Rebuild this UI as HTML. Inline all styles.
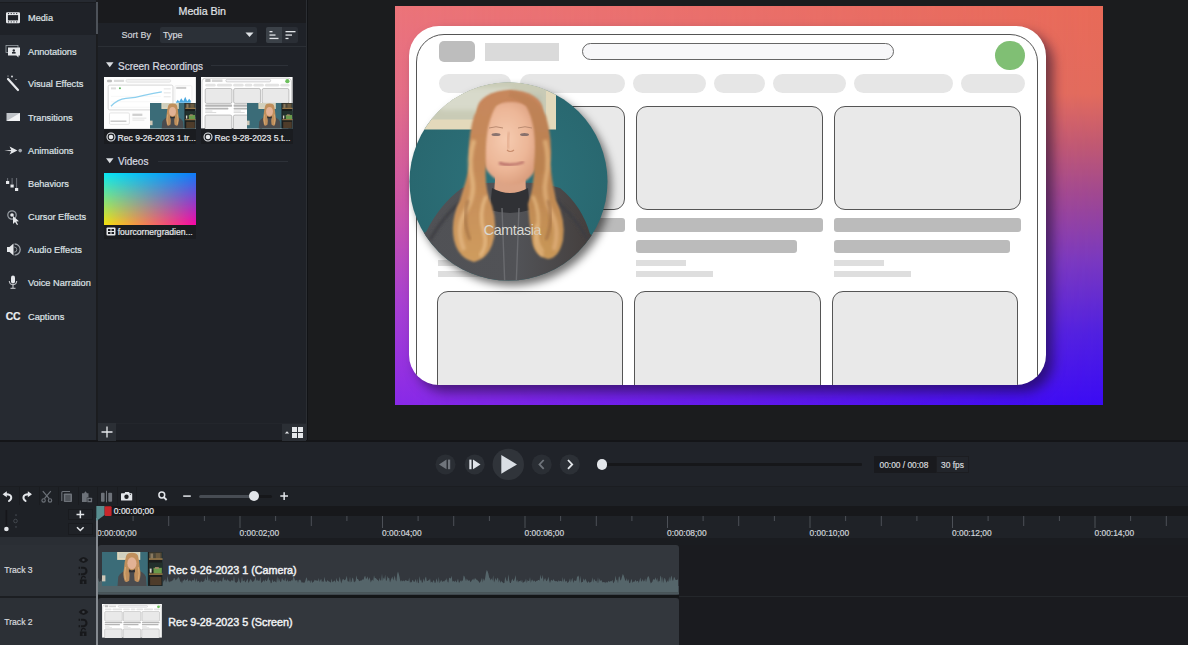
<!DOCTYPE html><html><head><meta charset="utf-8"><style>
*{margin:0;padding:0;box-sizing:border-box}
html,body{width:1188px;height:645px;overflow:hidden;background:#1b1c1f;font-family:"Liberation Sans",sans-serif;color:#d6d9dd}
.a{position:absolute}
.t{white-space:nowrap;-webkit-text-stroke:0.2px currentColor}
</style></head><body><div class="a" style="left:0px;top:0px;width:96px;height:441px;background:#262a31"></div>
<div class="a" style="left:0px;top:2px;width:96px;height:32.5px;background:#1f2228"></div>
<div class="a" style="left:0px;top:2px;width:96px;height:1px;background:#1a1c20"></div>
<div class="a" style="left:96.6px;top:0px;width:1.4px;height:441px;background:#1b1d20"></div>
<div class="a" style="left:96px;top:2px;width:1.6px;height:32px;background:#4d5259"></div>
<div class="a" style="left:98px;top:0px;width:208px;height:441px;background:#1f2228"></div>
<div class="a" style="left:98px;top:0px;width:208px;height:23px;background:#1a1b1e"></div>
<div class="a" style="left:98px;top:46px;width:208px;height:1px;background:#2b2f35"></div>
<div class="a" style="left:306px;top:0px;width:882px;height:441px;background:#1b1c1e"></div>
<div class="a" style="left:305.8px;top:0px;width:1.2px;height:441px;background:#2b2e33"></div>
<div class="a" style="left:307px;top:0px;width:1.3px;height:441px;background:#111316"></div>
<div class="a" style="left:0px;top:441px;width:1188px;height:45px;background:#202329"></div>
<div class="a" style="left:0px;top:440px;width:1188px;height:1.6px;background:#141518"></div>
<div class="a" style="left:0px;top:486px;width:1188px;height:20px;background:#1e2126"></div>
<div class="a" style="left:0px;top:485.5px;width:1188px;height:1px;background:#1b1d21"></div>
<div class="a" style="left:0px;top:506px;width:1188px;height:139px;background:#1a1b1f"></div>
<div class="a t" style="left:28px;top:14.1px;font-size:9.2px;line-height:9.2px;color:#dfe2e6">Media</div>
<div class="a t" style="left:28px;top:47.5px;font-size:9.2px;line-height:9.2px;color:#dfe2e6">Annotations</div>
<div class="a t" style="left:28px;top:80.2px;font-size:9.2px;line-height:9.2px;color:#dfe2e6">Visual Effects</div>
<div class="a t" style="left:28px;top:113.6px;font-size:9.2px;line-height:9.2px;color:#dfe2e6">Transitions</div>
<div class="a t" style="left:28px;top:146.9px;font-size:9.2px;line-height:9.2px;color:#dfe2e6">Animations</div>
<div class="a t" style="left:28px;top:180.0px;font-size:9.2px;line-height:9.2px;color:#dfe2e6">Behaviors</div>
<div class="a t" style="left:28px;top:213.1px;font-size:9.2px;line-height:9.2px;color:#dfe2e6">Cursor Effects</div>
<div class="a t" style="left:28px;top:246.1px;font-size:9.2px;line-height:9.2px;color:#dfe2e6">Audio Effects</div>
<div class="a t" style="left:28px;top:279.3px;font-size:9.2px;line-height:9.2px;color:#dfe2e6">Voice Narration</div>
<div class="a t" style="left:28px;top:312.5px;font-size:9.2px;line-height:9.2px;color:#dfe2e6">Captions</div>
<svg class="a" style="left:0;top:0" width="96" height="330" viewBox="0 0 96 330">
<rect x="6" y="12.2" width="14" height="11.1" rx="1.2" fill="#e6e8eb"/>
<rect x="7.9" y="15.1" width="10.2" height="5.3" fill="#1e2127"/>
<g fill="#1e2127"><rect x="8" y="13.1" width="1.1" height="1"/><rect x="10.7" y="13.1" width="1.1" height="1"/><rect x="13.4" y="13.1" width="1.1" height="1"/><rect x="16.1" y="13.1" width="1.1" height="1"/>
<rect x="8" y="21.4" width="1.1" height="1"/><rect x="10.7" y="21.4" width="1.1" height="1"/><rect x="13.4" y="21.4" width="1.1" height="1"/><rect x="16.1" y="21.4" width="1.1" height="1"/></g>
<!-- annotations -->
<rect x="6" y="45.5" width="12" height="7" fill="none" stroke="#9aa0a6" stroke-width="0.8"/>
<path d="M8 47.5h12v8h-1.5v2l-2.2-2H8z" fill="#e6e8eb"/>
<circle cx="13.8" cy="50.5" r="1.2" fill="#262a31"/><rect x="12" y="52" width="3.6" height="1.6" fill="#262a31"/>
<!-- visual effects wand -->
<path d="M8 79 L18 90" stroke="#e6e8eb" stroke-width="2.2" stroke-linecap="round"/>
<circle cx="12" cy="76.5" r="0.9" fill="#e6e8eb"/><circle cx="16" cy="79.5" r="0.6" fill="#e6e8eb"/><circle cx="8" cy="76" r="0.5" fill="#e6e8eb"/>
<!-- transitions -->
<path d="M6.5 113h13.5v8H6.5z" fill="#bfc3c8"/><path d="M6.5 121L20 113v8z" fill="#f2f3f5"/>
<!-- animations -->
<path d="M4.2 150.6 L11.2 149.9 L9.6 146.6 L17.4 150.6 L9.6 154.6 L11.2 151.3 Z" fill="#e6e8eb"/><circle cx="20.2" cy="150.6" r="1.8" fill="#a5aab0"/>
<!-- behaviors -->
<rect x="6" y="181" width="3.2" height="3" fill="#e6e8eb"/><rect x="10.5" y="184.5" width="3.2" height="3" fill="#e6e8eb"/><rect x="15" y="188" width="3.2" height="3" fill="#e6e8eb"/>
<path d="M7.6 178v3M12.1 178v6.5M16.6 178v10" stroke="#7d828a" stroke-width="0.8"/>
<!-- cursor effects -->
<circle cx="12" cy="215" r="4.2" fill="none" stroke="#9aa0a6" stroke-width="1.2"/><circle cx="12" cy="215" r="1.8" fill="#e6e8eb"/>
<path d="M13 216 L13 224 L15 222 L17 225 L18 224.4 L16.3 221.5 L19 221.2z" fill="#e6e8eb"/>
<!-- audio effects -->
<path d="M7 247h2.5l4-3.5v12l-4-3.5H7z" fill="#e6e8eb"/><path d="M14.6 244 A5.6 5.6 0 0 1 14.6 255.2" fill="none" stroke="#a0a5ab" stroke-width="1.3"/><path d="M14.2 247 A2.6 2.6 0 0 1 14.2 252.2" fill="none" stroke="#8a9096" stroke-width="1"/>
<!-- voice narration -->
<rect x="11" y="275.5" width="4" height="8" rx="2" fill="#e6e8eb"/><path d="M9.2 281a3.8 3.8 0 0 0 7.6 0" fill="none" stroke="#e6e8eb" stroke-width="0.9"/><path d="M13 285v3M10.5 288.3h5" stroke="#e6e8eb" stroke-width="0.9"/>
</svg>
<div class="a t" style="left:5.8px;top:312.2px;font-size:10.4px;line-height:10.4px;font-weight:bold;color:#eceef0;letter-spacing:-0.2px">CC</div>
<div class="a t" style="left:178.5px;top:5.6px;font-size:10.7px;line-height:10.7px;color:#e0e3e7">Media Bin</div>
<div class="a t" style="left:121.5px;top:31.4px;font-size:9px;line-height:9px;color:#cfd3d8">Sort By</div>
<div class="a" style="left:160px;top:27px;width:97px;height:16px;background:#2b3037;border-radius:2px"></div>
<div class="a t" style="left:163px;top:31.4px;font-size:9px;line-height:9px;color:#d6d9dd">Type</div>
<svg class="a" style="left:245px;top:32px" width="9" height="6"><path d="M0.5 0.5h8L4.5 5z" fill="#dfe2e6"/></svg>
<div class="a" style="left:266px;top:27px;width:32px;height:16px;background:#2a2e35;border-radius:2px"></div>
<div class="a" style="left:266px;top:27px;width:16px;height:16px;background:#3b4148;border-radius:2px 0 0 2px"></div>
<svg class="a" style="left:266px;top:27px" width="32" height="16">
<g fill="#e1e4e8"><rect x="3.5" y="4" width="3" height="1.3"/><rect x="3.5" y="7.4" width="6" height="1.3"/><rect x="3.5" y="10.8" width="9" height="1.3"/></g>
<g fill="#e1e4e8"><rect x="19.5" y="4" width="10" height="1.3"/><rect x="19.5" y="7.4" width="6.5" height="1.3"/><rect x="19.5" y="10.8" width="3" height="1.3"/></g>
</svg>
<svg class="a" style="left:106px;top:62px" width="8" height="6"><path d="M0 0.3h7.5L3.75 5.3z" fill="#d9dce0"/></svg>
<div class="a t" style="left:118px;top:61.8px;font-size:10px;line-height:10px;color:#d9dce0">Screen Recordings</div>
<div class="a" style="left:211px;top:65px;width:77px;height:1px;background:#2d3138"></div>
<svg class="a" style="left:106px;top:157.5px" width="8" height="6"><path d="M0 0.3h7.5L3.75 5.3z" fill="#d9dce0"/></svg>
<div class="a t" style="left:118px;top:157.0px;font-size:10px;line-height:10px;color:#d9dce0">Videos</div>
<div class="a" style="left:158px;top:160.5px;width:130px;height:1px;background:#2d3138"></div>
<div class="a" style="left:104px;top:129px;width:92px;height:15px;background:#1a1c20"></div>
<svg class="a" style="left:106px;top:132px" width="10" height="10"><circle cx="5" cy="5" r="4" fill="none" stroke="#e6e8eb" stroke-width="1.1"/><circle cx="5" cy="5" r="2.3" fill="#e6e8eb"/></svg>
<div class="a t" style="left:117.5px;top:133.9px;font-size:8.6px;line-height:8.6px;color:#e6e8eb">Rec 9-26-2023 1.tr...</div>
<div class="a" style="left:201px;top:129px;width:92px;height:15px;background:#1a1c20"></div>
<svg class="a" style="left:203px;top:132px" width="10" height="10"><circle cx="5" cy="5" r="4" fill="none" stroke="#e6e8eb" stroke-width="1.1"/><circle cx="5" cy="5" r="2.3" fill="#e6e8eb"/></svg>
<div class="a t" style="left:214.5px;top:133.9px;font-size:8.6px;line-height:8.6px;color:#e6e8eb">Rec 9-28-2023 5.t...</div>
<div class="a" style="left:104px;top:224.6px;width:92px;height:14px;background:#1a1c20"></div>
<svg class="a" style="left:106px;top:227px" width="10" height="9"><rect x="0.5" y="0.5" width="9" height="8" rx="1" fill="#e6e8eb"/><g fill="#1a1c20"><rect x="2" y="2" width="2.5" height="2"/><rect x="5.5" y="2" width="2.5" height="2"/><rect x="2" y="5" width="2.5" height="2"/><rect x="5.5" y="5" width="2.5" height="2"/></g></svg>
<div class="a t" style="left:117.7px;top:228.1px;font-size:8.6px;line-height:8.6px;color:#e6e8eb">fourcornergradien...</div>
<div class="a" style="left:104px;top:173px;width:92px;height:52px;background:linear-gradient(to right,#f5e20c,#fa06a6)"><div style="position:absolute;inset:0;background:linear-gradient(to right,#06e6f6,#0c7cf8);-webkit-mask-image:linear-gradient(to bottom,#000,transparent)"></div></div>
<div class="a" style="left:98px;top:422.5px;width:208px;height:1px;background:#23262c"></div>
<div class="a" style="left:98px;top:423px;width:18px;height:18px;background:#2b2f35"></div>
<svg class="a" style="left:100px;top:425px" width="14" height="14"><path d="M7 1.5v11M1.5 7h11" stroke="#e6e8eb" stroke-width="1.3"/></svg>
<div class="a" style="left:282px;top:424px;width:24px;height:17px;background:#2b2f35"></div>
<svg class="a" style="left:283px;top:425px" width="22" height="15"><path d="M1.8 8.6l2.2-2.4 2.2 2.4z" fill="#e6e8eb"/><g fill="#e6e8eb"><rect x="9" y="2" width="5" height="5"/><rect x="15" y="2" width="5" height="5"/><rect x="9" y="8" width="5" height="5"/><rect x="15" y="8" width="5" height="5"/></g></svg>
<div class="a" style="left:395px;top:6px;width:708px;height:399px;overflow:hidden;background:linear-gradient(to bottom,#ec7479 0%,#e46e88 22%,#cc56a8 50%,#a840d2 75%,#8a2ae8 100%)"><div style="position:absolute;inset:0;background:linear-gradient(to bottom,#e86a58 0%,#e26b5c 22%,#bf5872 35%,#a04890 47%,#7838c0 64%,#5020e0 82%,#3a0af4 100%);-webkit-mask-image:linear-gradient(to right,transparent,#000)"></div></div>
<div class="a" style="left:409px;top:26px;width:637px;height:358.5px;border-radius:30px;background:#fff;box-shadow:7px 7px 12px rgba(20,10,40,0.55);overflow:hidden">
<div class="a" style="left:7.0px;top:8.0px;width:622.0px;height:420.0px;border:1.3px solid #555;border-radius:28px"></div>
<div class="a" style="left:29.6px;top:14.6px;width:36.7px;height:21.1px;background:#bdbdbd;border-radius:5px"></div>
<div class="a" style="left:75.5px;top:16.7px;width:74.0px;height:18.0px;background:#dadada"></div>
<div class="a" style="left:172.5px;top:16.6px;width:312.0px;height:17.7px;background:#f7f7f9;border:1.2px solid #666;border-radius:9px"></div>
<div class="a" style="left:586.0px;top:14.8px;width:29.6px;height:29.6px;background:#80bf74;border-radius:50%"></div>
<div class="a" style="left:29.8px;top:47.5px;width:72.4px;height:19.4px;background:#e6e6e6;border-radius:10px"></div>
<div class="a" style="left:110.7px;top:47.5px;width:105.1px;height:19.4px;background:#e6e6e6;border-radius:10px"></div>
<div class="a" style="left:224.0px;top:47.5px;width:72.7px;height:19.4px;background:#e6e6e6;border-radius:10px"></div>
<div class="a" style="left:304.5px;top:47.5px;width:51.8px;height:19.4px;background:#e6e6e6;border-radius:10px"></div>
<div class="a" style="left:364.4px;top:47.5px;width:72.7px;height:19.4px;background:#e6e6e6;border-radius:10px"></div>
<div class="a" style="left:444.8px;top:47.5px;width:99.3px;height:19.4px;background:#e6e6e6;border-radius:10px"></div>
<div class="a" style="left:552.0px;top:47.5px;width:63.7px;height:19.4px;background:#e6e6e6;border-radius:10px"></div>
<div class="a" style="left:29.0px;top:80.0px;width:186.7px;height:104.0px;background:#e9e9e9;border:1.2px solid #555;border-radius:11px"></div>
<div class="a" style="left:29.0px;top:191.7px;width:186.7px;height:14.7px;background:#bbbbbb;border-radius:3px"></div>
<div class="a" style="left:29.0px;top:214.0px;width:140.0px;height:12.5px;background:#bbbbbb;border-radius:3px"></div>
<div class="a" style="left:29.0px;top:233.7px;width:50.4px;height:6.8px;background:#dedede"></div>
<div class="a" style="left:29.0px;top:244.7px;width:77.0px;height:6.4px;background:#dedede"></div>
<div class="a" style="left:227.0px;top:80.0px;width:186.7px;height:104.0px;background:#e9e9e9;border:1.2px solid #555;border-radius:11px"></div>
<div class="a" style="left:227.0px;top:191.7px;width:186.7px;height:14.7px;background:#bbbbbb;border-radius:3px"></div>
<div class="a" style="left:227.0px;top:214.0px;width:161.3px;height:12.5px;background:#bbbbbb;border-radius:3px"></div>
<div class="a" style="left:227.0px;top:233.7px;width:50.4px;height:6.8px;background:#dedede"></div>
<div class="a" style="left:227.0px;top:244.7px;width:77.0px;height:6.4px;background:#dedede"></div>
<div class="a" style="left:425.0px;top:80.0px;width:186.7px;height:104.0px;background:#e9e9e9;border:1.2px solid #555;border-radius:11px"></div>
<div class="a" style="left:425.0px;top:191.7px;width:186.7px;height:14.7px;background:#bbbbbb;border-radius:3px"></div>
<div class="a" style="left:425.0px;top:214.0px;width:176.2px;height:12.5px;background:#bbbbbb;border-radius:3px"></div>
<div class="a" style="left:425.0px;top:233.7px;width:50.4px;height:6.8px;background:#dedede"></div>
<div class="a" style="left:425.0px;top:244.7px;width:77.0px;height:6.4px;background:#dedede"></div>
<div class="a" style="left:27.8px;top:265.0px;width:186.4px;height:130.0px;background:#e9e9e9;border:1.2px solid #555;border-radius:11px"></div>
<div class="a" style="left:225.4px;top:265.0px;width:186.4px;height:130.0px;background:#e9e9e9;border:1.2px solid #555;border-radius:11px"></div>
<div class="a" style="left:422.8px;top:265.0px;width:186.4px;height:130.0px;background:#e9e9e9;border:1.2px solid #555;border-radius:11px"></div>
</div>
<svg class="a" style="left:395px;top:70px" width="240" height="230" viewBox="395 70 240 230">
<defs>
<clipPath id="cc"><circle cx="508.5" cy="181.6" r="99"/></clipPath>
<filter id="sh" x="-20%" y="-20%" width="140%" height="140%"><feGaussianBlur stdDeviation="4.5"/></filter>
<filter id="bl1" x="-20%" y="-20%" width="140%" height="140%"><feGaussianBlur stdDeviation="0.8"/></filter>
<filter id="bl2" x="-20%" y="-20%" width="140%" height="140%"><feGaussianBlur stdDeviation="2.5"/></filter>
<filter id="bl3" x="-30%" y="-30%" width="160%" height="160%"><feGaussianBlur stdDeviation="1.4"/></filter>
<radialGradient id="teal" cx="0.5" cy="0.5" r="0.55"><stop offset="0" stop-color="#2d737c"/><stop offset="0.85" stop-color="#296870"/><stop offset="1" stop-color="#205860"/></radialGradient>
<linearGradient id="hairL" x1="0" y1="0" x2="0" y2="1"><stop offset="0" stop-color="#c7875c"/><stop offset="0.45" stop-color="#c48a58"/><stop offset="1" stop-color="#cf9c5e"/></linearGradient>
<linearGradient id="hairR" x1="0" y1="0" x2="0" y2="1"><stop offset="0" stop-color="#c08258"/><stop offset="0.45" stop-color="#bb8250"/><stop offset="1" stop-color="#c99858"/></linearGradient>
<radialGradient id="skin" cx="0.42" cy="0.45" r="0.62"><stop offset="0" stop-color="#f6cbb0"/><stop offset="0.6" stop-color="#ecb697"/><stop offset="1" stop-color="#d89a7a"/></radialGradient>
<linearGradient id="hood" x1="0" y1="0" x2="1" y2="0"><stop offset="0" stop-color="#505155"/><stop offset="0.55" stop-color="#515256"/><stop offset="0.85" stop-color="#45403f"/><stop offset="1" stop-color="#3a3234"/></linearGradient>
</defs>
<circle cx="512.5" cy="186.5" r="99" fill="rgba(0,0,0,0.55)" filter="url(#sh)"/>
<g clip-path="url(#cc)">
 <rect x="405" y="78" width="210" height="210" fill="url(#teal)"/>
 <rect x="405" y="78" width="151" height="51.5" fill="#e3d9bb"/>
 <rect x="405" y="78" width="141" height="41.5" fill="#c9cbb6"/>
 <rect x="440" y="88" width="70" height="22" fill="#d8dacb" filter="url(#bl2)"/>
 <rect x="512" y="95" width="30" height="22" fill="#bcc2b2" filter="url(#bl2)"/>
 <!-- hoodie -->
 <path d="M400 300 L400 250 Q410 236 426 232 Q440 204 462 188 Q485 180 510 184 Q536 180 560 188 Q582 206 590 234 Q606 242 618 258 L618 300Z" fill="url(#hood)"/>
 <path d="M430 240 Q446 212 466 198" stroke="#3d3e42" stroke-width="3" fill="none" filter="url(#bl3)"/>
 <path d="M588 240 Q572 212 552 198" stroke="#3d3e42" stroke-width="3" fill="none" filter="url(#bl3)"/>
 <!-- neck + collar -->
 <path d="M496 166 L525 166 L526 194 L494 194Z" fill="#dda486"/>
 <path d="M492 188 Q510 198 528 188 L530 210 Q510 216 490 210Z" fill="#303135"/>
 <path d="M502 208 L505 290 M519 208 L516 290" stroke="#6a6b6f" stroke-width="1.4" fill="none"/>
 <!-- head top -->
 <ellipse cx="510" cy="110" rx="33" ry="20" fill="#c7865c" filter="url(#bl1)"/>
 <!-- face -->
 <path d="M492 106 Q511 98 530 106 Q541 122 541 146 Q540 170 527 180 Q512 189 497 180 Q481 170 480 146 Q481 122 492 106Z" fill="url(#skin)" filter="url(#bl1)"/>
 <!-- hair -->
 <path d="M510 91 Q484 94 474 116 Q467 140 470 164 Q466 182 460 200 Q450 220 454 240 Q458 258 474 262 Q490 258 494 238 Q497 222 492 206 Q484 188 486 166 Q484 126 496 106 Q504 99 512 97Z" fill="url(#hairL)" filter="url(#bl1)"/>
 <path d="M510 91 Q536 94 546 116 Q553 140 550 164 Q552 182 556 200 Q566 220 563 240 Q559 258 548 259 Q534 256 532 240 Q529 222 528 204 Q534 188 534 166 Q538 126 526 106 Q518 99 508 97Z" fill="url(#hairR)" filter="url(#bl1)"/>
 <!-- wave highlights -->
 <path d="M474 140 Q468 160 472 178 Q476 196 464 214 Q456 230 464 250" stroke="#dfb07a" stroke-width="4.5" fill="none" filter="url(#bl3)"/>
 <path d="M486 196 Q478 214 484 232 Q488 246 480 256" stroke="#e6ba84" stroke-width="3" fill="none" filter="url(#bl3)"/>
 <path d="M545 140 Q550 160 546 178 Q542 196 552 214 Q560 230 554 250" stroke="#daa872" stroke-width="4.5" fill="none" filter="url(#bl3)"/>
 <path d="M533 196 Q541 214 537 232 Q533 246 543 256" stroke="#e0b27a" stroke-width="3" fill="none" filter="url(#bl3)"/>
 <path d="M468 200 Q462 220 470 240" stroke="#9c6a40" stroke-width="2" fill="none" filter="url(#bl3)"/>
 <path d="M548 200 Q554 220 546 240" stroke="#9c6a40" stroke-width="2" fill="none" filter="url(#bl3)"/>
 <!-- features -->
 <path d="M489 128 Q496 125.5 503 128" stroke="#b98a70" stroke-width="1" fill="none"/>
 <path d="M518 128 Q525 125.5 532 128" stroke="#b98a70" stroke-width="1" fill="none"/>
 <ellipse cx="496" cy="134.5" rx="4.5" ry="1.6" fill="#5e5258" opacity="0.7"/>
 <ellipse cx="524.5" cy="134.5" rx="4.5" ry="1.6" fill="#5e5258" opacity="0.7"/>
 <path d="M509 132 Q507 142 508 149" stroke="#dca080" stroke-width="1.6" fill="none" filter="url(#bl1)"/>
 <path d="M507 150 Q510.5 153 514 150" stroke="#c88c6c" stroke-width="1.2" fill="none"/>
 <path d="M499 163 Q511 167 524 162" stroke="#b86e68" stroke-width="2.4" fill="none" filter="url(#bl1)"/>
 <text x="483.7" y="235" font-family="Liberation Sans" font-size="14.2" fill="#d8d8d2" letter-spacing="-0.3">Camtasia</text>
 <path d="M537 224 Q534 240 543 252" stroke="#e0b27a" stroke-width="2.5" fill="none" filter="url(#bl3)"/>
</g>
</svg>

<svg class="a" style="left:420px;top:441px" width="200" height="45" viewBox="420 441 200 45">
<circle cx="445.5" cy="464.4" r="10" fill="#2a2e34"/>
<circle cx="474.7" cy="464.4" r="10" fill="#2c3036"/>
<circle cx="508.3" cy="464.4" r="15.7" fill="#30343a"/>
<circle cx="541.7" cy="464.4" r="10" fill="#2a2e34"/>
<circle cx="569.8" cy="464.4" r="10" fill="#2c3036"/>
<path d="M439 464.4 L446.5 459.6 V469.2Z" fill="#70757c"/><rect x="448" y="459.6" width="2.2" height="9.6" fill="#70757c"/>
<rect x="469.3" y="459.6" width="2.2" height="9.6" fill="#dfe3e8"/><path d="M473 459.6 L480.5 464.4 L473 469.2Z" fill="#dfe3e8"/>
<path d="M501.3 455 L517 464.4 L501.3 473.8Z" fill="#d9dee4"/>
<path d="M543.7 460 L539.5 464.4 L543.7 468.8" stroke="#70757c" stroke-width="1.8" fill="none"/>
<path d="M568 460 L572.2 464.4 L568 468.8" stroke="#e3e6ea" stroke-width="1.8" fill="none"/>
</svg>
<div class="a" style="left:602px;top:463px;width:260px;height:2.6px;background:#16171a;border-radius:1px"></div>
<div class="a" style="left:596.8px;top:459.2px;width:10.4px;height:10.4px;background:#e3e6ea;border-radius:50%"></div>
<div class="a" style="left:874.3px;top:455.5px;width:62px;height:17.7px;background:#191a1e"></div>
<div class="a" style="left:936.4px;top:455.5px;width:32.6px;height:17.7px;background:#22252b;border:1px solid #1c1d21"></div>
<div class="a t" style="left:879.5px;top:461.4px;font-size:8.4px;line-height:8.4px;color:#d6d9dd">00:00 / 00:08</div>
<div class="a t" style="left:941px;top:461.4px;font-size:8.4px;line-height:8.4px;color:#d6d9dd">30 fps</div>
<div class="a" style="left:19.0px;top:487px;width:1px;height:18px;background:#1a1c20"></div>
<div class="a" style="left:38.5px;top:487px;width:1px;height:18px;background:#1a1c20"></div>
<div class="a" style="left:58.0px;top:487px;width:1px;height:18px;background:#1a1c20"></div>
<div class="a" style="left:77.5px;top:487px;width:1px;height:18px;background:#1a1c20"></div>
<div class="a" style="left:97.0px;top:487px;width:1px;height:18px;background:#1a1c20"></div>
<div class="a" style="left:116.5px;top:487px;width:1px;height:18px;background:#1a1c20"></div>
<div class="a" style="left:136.0px;top:487px;width:1px;height:18px;background:#1a1c20"></div>
<svg class="a" style="left:0;top:486px" width="300" height="20" viewBox="0 486 300 20">
<path d="M5 494.3 Q10.5 493.8 11.2 497 Q11.6 499.3 9 501" stroke="#e3e6ea" stroke-width="2" fill="none" stroke-linecap="round"/><path d="M2.6 494.3 L6.8 491.3 L6.8 497.3Z" fill="#e3e6ea"/>
<path d="M29.6 494.3 Q24.2 493.8 23.5 497 Q23.1 499.3 25.6 501" stroke="#e3e6ea" stroke-width="2" fill="none" stroke-linecap="round"/><path d="M32 494.3 L27.8 491.3 L27.8 497.3Z" fill="#e3e6ea"/>
<path d="M42.8 491.2 L49.2 498.6 M50.8 491.2 L44.4 498.6" stroke="#6d7279" stroke-width="1.2"/><circle cx="43.6" cy="500.4" r="1.7" fill="none" stroke="#6d7279" stroke-width="1.1"/><circle cx="50" cy="500.4" r="1.7" fill="none" stroke="#6d7279" stroke-width="1.1"/>
<path d="M61.8 501 V492.5 Q61.8 491.5 62.8 491.5 H70" stroke="#6d7279" stroke-width="1.1" fill="none"/><rect x="63.8" y="493.5" width="8.2" height="8.5" rx="0.8" fill="#6d7279"/><path d="M65.3 496h5.2M65.3 498h5.2M65.3 500h5.2" stroke="#23262c" stroke-width="0.8"/>
<path d="M82 502 V493.3 H84 L85.5 491.3 L87 493.3 H88.5 V497.5 H86.8 V502Z" fill="#6d7279"/><rect x="87.3" y="497.7" width="4.8" height="4.6" rx="0.5" fill="#6d7279"/><rect x="88.6" y="499" width="2.2" height="2" fill="#23262c"/>
<rect x="101" y="492.8" width="3.6" height="9" rx="0.8" fill="#6d7279"/><rect x="108.3" y="492.8" width="3.8" height="9" rx="0.8" fill="#6d7279"/><rect x="106" y="490.8" width="1" height="11.5" fill="#6d7279"/>
<path d="M121 493.8 Q121 493.2 121.6 493.2 H124.5 L125.2 492 H129 L129.7 493.2 H131.6 Q132.2 493.2 132.2 493.8 V500 Q132.2 500.5 131.6 500.5 H121.6 Q121 500.5 121 500Z" fill="#e3e6ea"/><circle cx="126.5" cy="496.7" r="2.2" fill="#1c1e22"/><circle cx="130.3" cy="494.5" r="0.5" fill="#1c1e22"/>
<circle cx="161.8" cy="495" r="2.9" fill="none" stroke="#e3e6ea" stroke-width="1.5"/><path d="M163.8 497.2 L166.6 500" stroke="#e3e6ea" stroke-width="1.8"/>
<path d="M183.2 496.1 H190.8" stroke="#e3e6ea" stroke-width="1.5"/>
<path d="M280.3 496.1 H288 M284.15 492.3 V500" stroke="#e3e6ea" stroke-width="1.5"/>
</svg>
<div class="a" style="left:199.3px;top:494.5px;width:72.7px;height:3.2px;background:#16171a;border-radius:2px"></div>
<div class="a" style="left:199.3px;top:494.5px;width:54px;height:3.2px;background:#474c53;border-radius:2px"></div>
<div class="a" style="left:248.6px;top:490.9px;width:10.4px;height:10.4px;background:#e3e6ea;border-radius:50%"></div>
<div class="a" style="left:0px;top:506px;width:96px;height:31px;background:#1e2126"></div>
<div class="a" style="left:0px;top:537px;width:96px;height:7.5px;background:#2a2e34"></div>
<div class="a" style="left:68px;top:508.6px;width:25px;height:11.5px;background:#1f2227;border:1px solid #191b1f"></div>
<div class="a" style="left:68px;top:523.4px;width:25px;height:11.8px;background:#1f2227;border:1px solid #191b1f"></div>
<svg class="a" style="left:0;top:506px" width="96" height="32" viewBox="0 506 96 32">
<path d="M76.5 514.4 H84.2 M80.35 510.5 V518.3" stroke="#e3e6ea" stroke-width="1.5"/>
<path d="M77 527.3 L80.3 530.5 L83.6 527.3" stroke="#e3e6ea" stroke-width="1.6" fill="none"/>
<rect x="5.6" y="510" width="1.6" height="23" fill="#15161a"/><circle cx="6.4" cy="529" r="2.3" fill="#e3e6ea"/>
<path d="M14.8 515.5 L16 514 L17.2 515.5Z" fill="#4b5057"/><circle cx="15.5" cy="521" r="1.8" fill="none" stroke="#4b5057" stroke-width="0.8"/><path d="M14.8 526.5 L16 528 L17.2 526.5Z" fill="#4b5057"/>
</svg>
<div class="a" style="left:96px;top:506px;width:1092px;height:10px;background:#17181b"></div>
<div class="a" style="left:96px;top:516px;width:1092px;height:21.5px;background:#1f2227"></div>
<div class="a" style="left:96px;top:537.5px;width:1092px;height:7px;background:#1a1c20"></div>
<svg class="a" style="left:0;top:0" width="1188" height="645"><rect x="97.0" y="516" width="1" height="12" fill="#4c5057"/><rect x="132.6" y="516" width="1" height="5" fill="#4c5057"/><rect x="168.2" y="516" width="1" height="10" fill="#4c5057"/><rect x="203.9" y="516" width="1" height="5" fill="#4c5057"/><rect x="239.5" y="516" width="1" height="12" fill="#4c5057"/><rect x="275.1" y="516" width="1" height="5" fill="#4c5057"/><rect x="310.8" y="516" width="1" height="10" fill="#4c5057"/><rect x="346.4" y="516" width="1" height="5" fill="#4c5057"/><rect x="382.0" y="516" width="1" height="12" fill="#4c5057"/><rect x="417.6" y="516" width="1" height="5" fill="#4c5057"/><rect x="453.2" y="516" width="1" height="10" fill="#4c5057"/><rect x="488.9" y="516" width="1" height="5" fill="#4c5057"/><rect x="524.5" y="516" width="1" height="12" fill="#4c5057"/><rect x="560.1" y="516" width="1" height="5" fill="#4c5057"/><rect x="595.8" y="516" width="1" height="10" fill="#4c5057"/><rect x="631.4" y="516" width="1" height="5" fill="#4c5057"/><rect x="667.0" y="516" width="1" height="12" fill="#4c5057"/><rect x="702.6" y="516" width="1" height="5" fill="#4c5057"/><rect x="738.2" y="516" width="1" height="10" fill="#4c5057"/><rect x="773.9" y="516" width="1" height="5" fill="#4c5057"/><rect x="809.5" y="516" width="1" height="12" fill="#4c5057"/><rect x="845.1" y="516" width="1" height="5" fill="#4c5057"/><rect x="880.8" y="516" width="1" height="10" fill="#4c5057"/><rect x="916.4" y="516" width="1" height="5" fill="#4c5057"/><rect x="952.0" y="516" width="1" height="12" fill="#4c5057"/><rect x="987.6" y="516" width="1" height="5" fill="#4c5057"/><rect x="1023.2" y="516" width="1" height="10" fill="#4c5057"/><rect x="1058.9" y="516" width="1" height="5" fill="#4c5057"/><rect x="1094.5" y="516" width="1" height="12" fill="#4c5057"/><rect x="1130.1" y="516" width="1" height="5" fill="#4c5057"/><rect x="1165.8" y="516" width="1" height="10" fill="#4c5057"/></svg>
<div class="a t" style="left:97.0px;top:528.9px;font-size:8.4px;line-height:8.4px;color:#d0d4d9">0:00:00;00</div>
<div class="a t" style="left:239.5px;top:528.9px;font-size:8.4px;line-height:8.4px;color:#d0d4d9">0:00:02;00</div>
<div class="a t" style="left:382.0px;top:528.9px;font-size:8.4px;line-height:8.4px;color:#d0d4d9">0:00:04;00</div>
<div class="a t" style="left:524.5px;top:528.9px;font-size:8.4px;line-height:8.4px;color:#d0d4d9">0:00:06;00</div>
<div class="a t" style="left:667.0px;top:528.9px;font-size:8.4px;line-height:8.4px;color:#d0d4d9">0:00:08;00</div>
<div class="a t" style="left:809.5px;top:528.9px;font-size:8.4px;line-height:8.4px;color:#d0d4d9">0:00:10;00</div>
<div class="a t" style="left:952.0px;top:528.9px;font-size:8.4px;line-height:8.4px;color:#d0d4d9">0:00:12;00</div>
<div class="a t" style="left:1094.5px;top:528.9px;font-size:8.4px;line-height:8.4px;color:#d0d4d9">0:00:14;00</div>
<div class="a t" style="left:113.8px;top:507.4px;font-size:8.5px;line-height:8.5px;color:#e6e8eb">0:00:00;00</div>
<div class="a" style="left:0px;top:544.5px;width:96px;height:51px;background:#2c3036"></div>
<div class="a" style="left:0px;top:595.5px;width:96px;height:2px;background:#1c1e22"></div>
<div class="a" style="left:0px;top:597.5px;width:96px;height:48px;background:#2c3036"></div>
<div class="a t" style="left:4.3px;top:566.2px;font-size:8.6px;line-height:8.6px;color:#d6d9dd">Track 3</div>
<div class="a t" style="left:4.3px;top:618.4px;font-size:8.6px;line-height:8.6px;color:#d6d9dd">Track 2</div>
<svg class="a" style="left:76px;top:553.7px" width="16" height="30" viewBox="76 553.7 16 30">
<path d="M78.7 559.7 Q83.5 553.5 88.3 559.7 Q83.5 565.9000000000001 78.7 559.7Z" fill="#17181b"/><circle cx="83.4" cy="559.7" r="1.3" fill="#3a3e44"/>
<path d="M81 567.5 H83.3 A3.2 3.2 0 0 1 83.3 573.9000000000001 H81" stroke="#17181b" stroke-width="2.1" fill="none"/>
<rect x="78.6" y="566.45" width="1.5" height="2.1" fill="#17181b"/><rect x="78.6" y="572.85" width="1.5" height="2.1" fill="#17181b"/>
<rect x="79.9" y="579.2" width="6.6" height="6" fill="#17181b"/><rect x="82.6" y="581.0" width="1.3" height="2.3" fill="#33373d"/>
<path d="M81.5 579.2 V578.0 A1.9 1.9 0 0 1 85.3 578.0" stroke="#17181b" stroke-width="1.2" fill="none"/>
</svg>
<svg class="a" style="left:76px;top:606px" width="16" height="30" viewBox="76 606 16 30">
<path d="M78.7 612 Q83.5 605.8 88.3 612 Q83.5 618.2 78.7 612Z" fill="#17181b"/><circle cx="83.4" cy="612" r="1.3" fill="#3a3e44"/>
<path d="M81 619.8 H83.3 A3.2 3.2 0 0 1 83.3 626.2 H81" stroke="#17181b" stroke-width="2.1" fill="none"/>
<rect x="78.6" y="618.75" width="1.5" height="2.1" fill="#17181b"/><rect x="78.6" y="625.15" width="1.5" height="2.1" fill="#17181b"/>
<rect x="79.9" y="631.5" width="6.6" height="6" fill="#17181b"/><rect x="82.6" y="633.3" width="1.3" height="2.3" fill="#33373d"/>
<path d="M81.5 631.5 V630.3 A1.9 1.9 0 0 1 85.3 630.3" stroke="#17181b" stroke-width="1.2" fill="none"/>
</svg>
<div class="a" style="left:679px;top:596px;width:509px;height:1px;background:#24272b"></div>
<div class="a" style="left:97.5px;top:545px;width:581.5px;height:49.5px;background:#33373d;border-radius:3px"></div>
<div class="a" style="left:97.5px;top:598px;width:581.5px;height:47px;background:#33373d;border-radius:3px 3px 0 0"></div>
<div class="a" style="left:97.5px;top:594.5px;width:581.5px;height:3.5px;background:#141618"></div>
<svg class="a" style="left:0;top:0" width="1188" height="645"><path d="M98 592 L98.0 577.5 L98.8 581.1 L99.6 581.9 L100.4 580.6 L101.2 581.8 L102.0 578.2 L102.8 581.1 L103.6 583.4 L104.4 582.8 L105.2 578.8 L106.0 581.3 L106.8 581.1 L107.6 576.9 L108.4 580.9 L109.2 580.4 L110.0 581.9 L110.8 580.1 L111.6 582.5 L112.4 580.0 L113.2 581.2 L114.0 578.0 L114.8 580.7 L115.6 580.7 L116.4 582.6 L117.2 582.8 L118.0 581.0 L118.8 577.4 L119.6 576.9 L120.4 579.5 L121.2 575.4 L122.0 580.6 L122.8 582.3 L123.6 583.2 L124.4 581.1 L125.2 579.4 L126.0 580.4 L126.8 580.2 L127.6 578.1 L128.4 579.2 L129.2 581.3 L130.0 583.3 L130.8 578.2 L131.6 581.3 L132.4 580.9 L133.2 580.6 L134.0 582.5 L134.8 583.2 L135.6 583.2 L136.4 581.3 L137.2 579.2 L138.0 581.0 L138.8 579.3 L139.6 581.0 L140.4 579.5 L141.2 582.4 L142.0 577.6 L142.8 578.5 L143.6 578.9 L144.4 580.1 L145.2 580.0 L146.0 580.6 L146.8 580.3 L147.6 578.2 L148.4 581.4 L149.2 581.9 L150.0 580.0 L150.8 580.3 L151.6 577.4 L152.4 582.5 L153.2 581.1 L154.0 580.0 L154.8 579.1 L155.6 580.3 L156.4 580.1 L157.2 581.4 L158.0 578.6 L158.8 580.9 L159.6 582.9 L160.4 581.8 L161.2 578.7 L162.0 580.0 L162.8 583.4 L163.6 580.9 L164.4 580.6 L165.2 579.0 L166.0 582.6 L166.8 580.3 L167.6 576.1 L168.4 580.7 L169.2 582.6 L170.0 580.9 L170.8 581.8 L171.6 581.1 L172.4 580.6 L173.2 580.1 L174.0 577.8 L174.8 578.6 L175.6 580.4 L176.4 579.5 L177.2 579.0 L178.0 577.2 L178.8 577.6 L179.6 579.1 L180.4 582.0 L181.2 581.2 L182.0 583.4 L182.8 580.5 L183.6 580.7 L184.4 578.7 L185.2 580.7 L186.0 580.1 L186.8 579.9 L187.6 578.2 L188.4 581.4 L189.2 580.4 L190.0 580.0 L190.8 580.9 L191.6 581.7 L192.4 579.9 L193.2 580.3 L194.0 580.5 L194.8 577.6 L195.6 582.5 L196.4 578.0 L197.2 581.8 L198.0 581.3 L198.8 580.7 L199.6 582.6 L200.4 582.2 L201.2 580.5 L202.0 582.1 L202.8 581.8 L203.6 581.6 L204.4 580.8 L205.2 577.2 L206.0 580.1 L206.8 580.2 L207.6 574.2 L208.4 580.3 L209.2 580.9 L210.0 578.2 L210.8 581.7 L211.6 582.1 L212.4 580.2 L213.2 581.3 L214.0 581.0 L214.8 582.6 L215.6 581.6 L216.4 579.8 L217.2 579.9 L218.0 583.0 L218.8 580.5 L219.6 580.9 L220.4 580.4 L221.2 581.1 L222.0 582.0 L222.8 577.8 L223.6 577.3 L224.4 580.5 L225.2 579.2 L226.0 580.7 L226.8 580.5 L227.6 578.9 L228.4 580.6 L229.2 580.8 L230.0 581.7 L230.8 581.2 L231.6 580.0 L232.4 580.6 L233.2 581.1 L234.0 575.4 L234.8 581.6 L235.6 582.6 L236.4 582.8 L237.2 582.0 L238.0 581.0 L238.8 577.3 L239.6 581.2 L240.4 583.3 L241.2 581.4 L242.0 576.5 L242.8 581.2 L243.6 581.1 L244.4 579.9 L245.2 582.4 L246.0 581.4 L246.8 580.2 L247.6 578.5 L248.4 583.0 L249.2 581.8 L250.0 580.0 L250.8 579.1 L251.6 580.4 L252.4 581.9 L253.2 581.4 L254.0 581.1 L254.8 579.2 L255.6 576.6 L256.4 580.9 L257.2 579.4 L258.0 580.9 L258.8 580.5 L259.6 580.8 L260.4 576.4 L261.2 583.3 L262.0 582.0 L262.8 581.5 L263.6 580.1 L264.4 582.1 L265.2 579.3 L266.0 580.7 L266.8 581.2 L267.6 579.4 L268.4 576.4 L269.2 580.5 L270.0 580.1 L270.8 583.2 L271.6 582.9 L272.4 578.9 L273.2 582.1 L274.0 581.5 L274.8 581.0 L275.6 582.1 L276.4 582.4 L277.2 576.0 L278.0 581.9 L278.8 577.8 L279.6 580.2 L280.4 582.0 L281.2 581.5 L282.0 577.7 L282.8 579.5 L283.6 580.3 L284.4 581.0 L285.2 577.5 L286.0 581.0 L286.8 581.4 L287.6 579.3 L288.4 581.9 L289.2 580.6 L290.0 581.5 L290.8 581.1 L291.6 580.1 L292.4 580.8 L293.2 577.3 L294.0 576.9 L294.8 579.6 L295.6 580.8 L296.4 580.2 L297.2 579.9 L298.0 582.7 L298.8 580.0 L299.6 579.7 L300.4 579.7 L301.2 581.4 L302.0 583.1 L302.8 581.9 L303.6 582.7 L304.4 582.8 L305.2 581.2 L306.0 578.4 L306.8 577.2 L307.6 581.8 L308.4 580.0 L309.2 581.6 L310.0 579.9 L310.8 583.3 L311.6 579.8 L312.4 582.9 L313.2 582.1 L314.0 581.2 L314.8 579.5 L315.6 580.4 L316.4 580.5 L317.2 580.6 L318.0 581.1 L318.8 578.1 L319.6 582.0 L320.4 580.0 L321.2 578.7 L322.0 582.4 L322.8 580.8 L323.6 582.2 L324.4 576.8 L325.2 580.5 L326.0 582.1 L326.8 581.5 L327.6 579.9 L328.4 581.2 L329.2 581.5 L330.0 582.1 L330.8 582.7 L331.6 578.5 L332.4 582.3 L333.2 581.7 L334.0 580.8 L334.8 580.5 L335.6 582.7 L336.4 577.7 L337.2 580.9 L338.0 580.6 L338.8 582.3 L339.6 576.5 L340.4 579.8 L341.2 583.4 L342.0 581.0 L342.8 578.9 L343.6 579.2 L344.4 580.2 L345.2 580.1 L346.0 578.4 L346.8 575.7 L347.6 581.2 L348.4 581.2 L349.2 582.2 L350.0 576.4 L350.8 582.5 L351.6 581.5 L352.4 577.5 L353.2 578.6 L354.0 582.4 L354.8 581.4 L355.6 581.3 L356.4 575.2 L357.2 579.0 L358.0 579.0 L358.8 580.5 L359.6 581.3 L360.4 580.5 L361.2 580.8 L362.0 579.9 L362.8 579.3 L363.6 579.7 L364.4 576.8 L365.2 575.8 L366.0 579.0 L366.8 578.3 L367.6 576.3 L368.4 580.5 L369.2 577.3 L370.0 579.1 L370.8 582.6 L371.6 580.5 L372.4 579.4 L373.2 581.2 L374.0 575.3 L374.8 578.3 L375.6 578.1 L376.4 578.7 L377.2 579.8 L378.0 580.1 L378.8 581.4 L379.6 577.7 L380.4 580.5 L381.2 580.6 L382.0 573.4 L382.8 581.1 L383.6 577.5 L384.4 579.1 L385.2 574.4 L386.0 580.9 L386.8 580.2 L387.6 576.0 L388.4 578.2 L389.2 577.9 L390.0 582.5 L390.8 580.3 L391.6 578.3 L392.4 576.5 L393.2 580.6 L394.0 578.1 L394.8 575.3 L395.6 579.9 L396.4 581.5 L397.2 573.9 L398.0 571.5 L398.8 573.9 L399.6 577.3 L400.4 581.7 L401.2 580.1 L402.0 581.4 L402.8 580.7 L403.6 580.4 L404.4 581.6 L405.2 579.9 L406.0 580.5 L406.8 580.6 L407.6 581.1 L408.4 580.9 L409.2 577.4 L410.0 582.9 L410.8 581.5 L411.6 582.6 L412.4 579.7 L413.2 580.6 L414.0 582.3 L414.8 581.2 L415.6 578.7 L416.4 582.9 L417.2 578.7 L418.0 583.2 L418.8 582.7 L419.6 576.1 L420.4 581.1 L421.2 579.6 L422.0 582.9 L422.8 582.0 L423.6 578.2 L424.4 582.1 L425.2 578.1 L426.0 576.6 L426.8 581.1 L427.6 581.1 L428.4 580.3 L429.2 580.2 L430.0 578.2 L430.8 582.7 L431.6 581.5 L432.4 582.7 L433.2 580.6 L434.0 580.3 L434.8 583.1 L435.6 582.5 L436.4 578.2 L437.2 580.8 L438.0 582.8 L438.8 576.7 L439.6 583.3 L440.4 581.4 L441.2 579.7 L442.0 581.6 L442.8 581.8 L443.6 581.0 L444.4 581.6 L445.2 579.6 L446.0 580.7 L446.8 577.9 L447.6 582.0 L448.4 582.6 L449.2 577.5 L450.0 578.2 L450.8 578.4 L451.6 575.8 L452.4 581.4 L453.2 581.2 L454.0 581.1 L454.8 582.0 L455.6 580.3 L456.4 582.4 L457.2 581.0 L458.0 578.4 L458.8 582.5 L459.6 582.5 L460.4 580.3 L461.2 581.8 L462.0 579.9 L462.8 581.2 L463.6 575.6 L464.4 576.3 L465.2 578.6 L466.0 581.2 L466.8 578.6 L467.6 580.1 L468.4 581.0 L469.2 579.7 L470.0 581.3 L470.8 582.3 L471.6 580.6 L472.4 579.7 L473.2 578.5 L474.0 580.4 L474.8 578.2 L475.6 578.4 L476.4 579.7 L477.2 579.7 L478.0 581.1 L478.8 581.6 L479.6 582.9 L480.4 581.7 L481.2 580.0 L482.0 577.7 L482.8 582.4 L483.6 578.3 L484.4 581.1 L485.2 577.8 L486.0 572.5 L486.8 570.1 L487.6 571.3 L488.4 573.7 L489.2 577.6 L490.0 578.4 L490.8 580.6 L491.6 578.2 L492.4 580.7 L493.2 575.2 L494.0 582.4 L494.8 580.5 L495.6 577.8 L496.4 580.8 L497.2 578.6 L498.0 577.4 L498.8 582.6 L499.6 579.3 L500.4 583.1 L501.2 580.5 L502.0 582.2 L502.8 582.2 L503.6 583.2 L504.4 582.9 L505.2 576.5 L506.0 579.2 L506.8 581.5 L507.6 581.1 L508.4 574.3 L509.2 580.2 L510.0 582.9 L510.8 583.0 L511.6 580.4 L512.4 578.4 L513.2 580.9 L514.0 580.5 L514.8 578.5 L515.6 575.1 L516.4 582.0 L517.2 579.6 L518.0 582.6 L518.8 581.0 L519.6 581.2 L520.4 580.2 L521.2 582.3 L522.0 579.5 L522.8 582.9 L523.6 582.2 L524.4 581.6 L525.2 581.6 L526.0 578.4 L526.8 582.9 L527.6 579.9 L528.4 580.9 L529.2 581.0 L530.0 577.1 L530.8 582.8 L531.6 580.3 L532.4 579.4 L533.2 581.7 L534.0 580.2 L534.8 581.0 L535.6 582.0 L536.4 580.7 L537.2 581.1 L538.0 579.9 L538.8 579.9 L539.6 580.7 L540.4 574.6 L541.2 578.7 L542.0 578.3 L542.8 574.8 L543.6 581.7 L544.4 579.3 L545.2 578.1 L546.0 580.5 L546.8 581.2 L547.6 579.4 L548.4 576.7 L549.2 580.5 L550.0 583.1 L550.8 580.4 L551.6 579.7 L552.4 581.3 L553.2 579.0 L554.0 580.3 L554.8 581.1 L555.6 581.3 L556.4 581.1 L557.2 581.5 L558.0 581.8 L558.8 580.0 L559.6 581.4 L560.4 580.8 L561.2 581.1 L562.0 581.8 L562.8 577.1 L563.6 582.2 L564.4 577.9 L565.2 581.2 L566.0 581.7 L566.8 580.6 L567.6 583.2 L568.4 581.9 L569.2 581.0 L570.0 578.2 L570.8 582.5 L571.6 579.8 L572.4 577.7 L573.2 583.1 L574.0 580.8 L574.8 580.3 L575.6 581.1 L576.4 580.6 L577.2 575.9 L578.0 577.1 L578.8 575.2 L579.6 583.1 L580.4 575.4 L581.2 582.7 L582.0 582.1 L582.8 582.0 L583.6 578.2 L584.4 580.9 L585.2 578.5 L586.0 580.1 L586.8 581.7 L587.6 583.0 L588.4 581.0 L589.2 582.6 L590.0 582.4 L590.8 582.0 L591.6 581.6 L592.4 577.3 L593.2 582.5 L594.0 578.7 L594.8 580.0 L595.6 581.2 L596.4 580.5 L597.2 583.3 L598.0 576.9 L598.8 583.3 L599.6 578.3 L600.4 581.2 L601.2 579.7 L602.0 581.6 L602.8 582.4 L603.6 581.9 L604.4 582.0 L605.2 583.3 L606.0 581.4 L606.8 582.6 L607.6 582.4 L608.4 580.8 L609.2 582.0 L610.0 581.3 L610.8 581.3 L611.6 581.2 L612.4 579.8 L613.2 583.3 L614.0 582.3 L614.8 580.4 L615.6 575.4 L616.4 580.4 L617.2 579.5 L618.0 583.3 L618.8 576.8 L619.6 576.6 L620.4 580.8 L621.2 579.6 L622.0 576.5 L622.8 574.1 L623.6 575.3 L624.4 577.7 L625.2 580.3 L626.0 581.1 L626.8 578.1 L627.6 581.5 L628.4 579.0 L629.2 582.8 L630.0 583.3 L630.8 580.7 L631.6 578.8 L632.4 583.1 L633.2 581.3 L634.0 582.2 L634.8 581.0 L635.6 579.8 L636.4 581.7 L637.2 581.0 L638.0 580.8 L638.8 583.1 L639.6 580.0 L640.4 577.4 L641.2 581.8 L642.0 580.7 L642.8 579.0 L643.6 581.4 L644.4 580.9 L645.2 578.3 L646.0 582.2 L646.8 579.3 L647.6 577.0 L648.4 576.1 L649.2 577.7 L650.0 580.9 L650.8 583.4 L651.6 582.4 L652.4 581.7 L653.2 579.0 L654.0 579.7 L654.8 579.6 L655.6 577.3 L656.4 580.7 L657.2 577.8 L658.0 582.5 L658.8 580.5 L659.6 581.4 L660.4 575.4 L661.2 577.2 L662.0 583.1 L662.8 576.5 L663.6 583.3 L664.4 577.8 L665.2 578.8 L666.0 581.2 L666.8 582.7 L667.6 580.2 L668.4 582.0 L669.2 576.4 L670.0 581.4 L670.8 577.6 L671.6 575.6 L672.4 580.4 L673.2 580.4 L674.0 576.7 L674.8 578.1 L675.6 580.0 L676.4 580.1 L677.2 580.1 L678.0 578.9 L678 592 Z" fill="#55656a"/><rect x="97.5" y="586" width="581" height="6.5" fill="#55656a"/><rect x="97.5" y="592.3" width="581.5" height="2.2" fill="#4b575c"/></svg>
<div class="a t" style="left:168.2px;top:565.0px;font-size:10.75px;line-height:10.75px;color:#eef0f2;-webkit-text-stroke:0.45px #eef0f2">Rec 9-26-2023 1 (Camera)</div>
<div class="a t" style="left:168.2px;top:617.2px;font-size:10.75px;line-height:10.75px;color:#eef0f2;-webkit-text-stroke:0.45px #eef0f2">Rec 9-28-2023 5 (Screen)</div>
<svg class="a" style="left:104.2px;top:77.3px" width="91.7" height="51.8" viewBox="0 0 100 100" preserveAspectRatio="none"><rect x="0" y="0" width="100" height="100" fill="#fff"/></svg>
<svg class="a" style="left:201.1px;top:77.3px" width="91.6" height="51.4" viewBox="409 26 637 358" preserveAspectRatio="none"><rect x="409" y="26" width="637" height="358" fill="#fff"/><rect x="416" y="34" width="622" height="400" rx="28" fill="none" stroke="#555" stroke-width="2"/><rect x="438.6" y="40.6" width="36.7" height="21.1" rx="5" fill="#bdbdbd"/><rect x="484.5" y="42.7" width="74" height="18" fill="#d6d6d6"/><rect x="581.5" y="42.6" width="312" height="17.7" rx="9" fill="#f4f4f6" stroke="#777" stroke-width="2"/><circle cx="1009.8" cy="55.6" r="14.8" fill="#6cbf5c"/><rect x="438.8" y="73.5" width="72.4" height="19.4" rx="9.7" fill="#e3e3e3"/><rect x="519.7" y="73.5" width="105.1" height="19.4" rx="9.7" fill="#e3e3e3"/><rect x="633" y="73.5" width="72.7" height="19.4" rx="9.7" fill="#e3e3e3"/><rect x="713.5" y="73.5" width="51.8" height="19.4" rx="9.7" fill="#e3e3e3"/><rect x="773.4" y="73.5" width="72.7" height="19.4" rx="9.7" fill="#e3e3e3"/><rect x="853.8" y="73.5" width="99.3" height="19.4" rx="9.7" fill="#e3e3e3"/><rect x="961" y="73.5" width="63.7" height="19.4" rx="9.7" fill="#e3e3e3"/><rect x="438" y="106" width="186.7" height="104" rx="11" fill="#e9e9e9" stroke="#666" stroke-width="2.5"/><rect x="438" y="217.7" width="186.7" height="14.7" rx="3" fill="#b5b5b5"/><rect x="438" y="240" width="161.3" height="12.5" rx="3" fill="#b5b5b5"/><rect x="438" y="259.7" width="50.4" height="6.8" fill="#d8d8d8"/><rect x="438" y="270.7" width="77" height="6.4" fill="#d8d8d8"/><rect x="636" y="106" width="186.7" height="104" rx="11" fill="#e9e9e9" stroke="#666" stroke-width="2.5"/><rect x="636" y="217.7" width="186.7" height="14.7" rx="3" fill="#b5b5b5"/><rect x="636" y="240" width="161.3" height="12.5" rx="3" fill="#b5b5b5"/><rect x="636" y="259.7" width="50.4" height="6.8" fill="#d8d8d8"/><rect x="636" y="270.7" width="77" height="6.4" fill="#d8d8d8"/><rect x="834" y="106" width="186.7" height="104" rx="11" fill="#e9e9e9" stroke="#666" stroke-width="2.5"/><rect x="834" y="217.7" width="186.7" height="14.7" rx="3" fill="#b5b5b5"/><rect x="834" y="240" width="176.2" height="12.5" rx="3" fill="#b5b5b5"/><rect x="834" y="259.7" width="50.4" height="6.8" fill="#d8d8d8"/><rect x="834" y="270.7" width="77" height="6.4" fill="#d8d8d8"/><rect x="436.8" y="291" width="186.4" height="130" rx="11" fill="#e9e9e9" stroke="#666" stroke-width="2.5"/><rect x="634.4" y="291" width="186.4" height="130" rx="11" fill="#e9e9e9" stroke="#666" stroke-width="2.5"/><rect x="831.8" y="291" width="186.4" height="130" rx="11" fill="#e9e9e9" stroke="#666" stroke-width="2.5"/></svg>
<svg class="a" style="left:247.1px;top:103.2px" width="45.6" height="25.6" viewBox="0 0 160 90" preserveAspectRatio="none"><rect x="0" y="0" width="160" height="90" fill="#3b6c78"/><rect x="40" y="0" width="61" height="21" fill="#e2d8bc"/><rect x="44" y="1" width="53" height="15" fill="#cfcfbe"/><rect x="0" y="62" width="9" height="16" fill="#cfc8b8"/><rect x="121" y="0" width="39" height="90" fill="#1b1d1d"/><rect x="124" y="1" width="34" height="17" fill="#4a4638"/><rect x="128" y="4" width="7" height="13" fill="#8a7a60"/><rect x="142" y="3" width="12" height="14" fill="#6a5a40"/><rect x="124" y="17" width="36" height="3.5" fill="#b08a52"/><rect x="124" y="28" width="36" height="20" fill="#22302c"/><rect x="136" y="42" width="22" height="15" fill="#6a9a4a"/><rect x="140" y="40" width="10" height="5" fill="#a08868"/><rect x="126" y="44" width="5" height="11" fill="#d8d4c8"/><rect x="124" y="57" width="36" height="3.5" fill="#a8844c"/><rect x="127" y="66" width="30" height="22" fill="#4e3c2a"/><path d="M41 90 L43 66 Q50 52 64 49 L94 49 Q110 52 116 66 L118 90Z" fill="#4a4b4e"/><path d="M64 10 Q66 2 79 2 Q92 2 95 10 Q99 26 100 44 Q104 62 98 78 Q92 82 86 76 Q84 62 86 50 L72 50 Q74 62 72 76 Q66 82 60 78 Q54 62 58 44 Q59 26 64 10Z" fill="#c08f5c"/><path d="M62 40 Q58 56 62 74 M96 40 Q100 56 96 74" stroke="#dcb07a" stroke-width="2.5" fill="none"/><ellipse cx="79" cy="30" rx="12" ry="16" fill="#e2b295"/><path d="M71 46 Q79 52 87 46 L87 54 L71 54Z" fill="#2e2f32"/></svg>
<svg class="a" style="left:104.2px;top:77.3px" width="91.7" height="51.5" viewBox="0 0 92 52" preserveAspectRatio="none"><rect x="0" y="0" width="92" height="52" fill="#fdfdfd"/><rect x="3" y="2.7" width="5" height="2.5" rx="1" fill="#bdbdbd"/><rect x="10" y="2.8" width="10" height="2.2" fill="#dadada"/><rect x="22" y="2.5" width="45" height="2.8" rx="1.4" fill="#f2f2f2" stroke="#cfcfcf" stroke-width="0.4"/><rect x="4.2" y="8.2" width="65" height="25" rx="1.5" fill="#fff" stroke="#c4c4c4" stroke-width="0.7"/><path d="M7 30.5 h60 M7 25 h50 M7 19.5 h50" stroke="#eeeeee" stroke-width="0.5"/><rect x="7" y="10.5" width="5" height="2" fill="#ddd"/><circle cx="16" cy="11.4" r="1" fill="#5cb85c"/><path d="M7 29.5 Q14 22 22 21.5 Q32 21 40 18.5 Q50 16.5 58 15" stroke="#8ccfee" stroke-width="1.3" fill="none"/><path d="M60 12 h7 M60 16 h7 M60 20 h7" stroke="#ddd" stroke-width="0.8"/><rect x="71.2" y="8.8" width="17" height="16" rx="1" fill="#fff" stroke="#e0e0e0" stroke-width="0.5"/><rect x="72.5" y="10" width="10" height="2" fill="#ccc"/><path d="M72 26 l2 -3 l1.5 2 l2 -3.5 l2 3 l2 -4.5 l2 4.5 l2 -2.5 l1.5 2 v2z" fill="#4aa8e0"/><rect x="5.5" y="36.3" width="20" height="11.5" rx="1.2" fill="#fff" stroke="#d4d4d4" stroke-width="0.6"/><rect x="6.5" y="44" width="16" height="1.2" fill="#bbb"/><rect x="28.5" y="37" width="10" height="2.3" fill="#cfcfcf"/><rect x="28.5" y="41" width="14" height="1" fill="#e2e2e2"/><rect x="28.5" y="43" width="12" height="1" fill="#e2e2e2"/></svg>
<svg class="a" style="left:150.3px;top:103.2px" width="45.6" height="25.6" viewBox="0 0 160 90" preserveAspectRatio="none"><rect x="0" y="0" width="160" height="90" fill="#3b6c78"/><rect x="40" y="0" width="61" height="21" fill="#e2d8bc"/><rect x="44" y="1" width="53" height="15" fill="#cfcfbe"/><rect x="0" y="62" width="9" height="16" fill="#cfc8b8"/><rect x="121" y="0" width="39" height="90" fill="#1b1d1d"/><rect x="124" y="1" width="34" height="17" fill="#4a4638"/><rect x="128" y="4" width="7" height="13" fill="#8a7a60"/><rect x="142" y="3" width="12" height="14" fill="#6a5a40"/><rect x="124" y="17" width="36" height="3.5" fill="#b08a52"/><rect x="124" y="28" width="36" height="20" fill="#22302c"/><rect x="136" y="42" width="22" height="15" fill="#6a9a4a"/><rect x="140" y="40" width="10" height="5" fill="#a08868"/><rect x="126" y="44" width="5" height="11" fill="#d8d4c8"/><rect x="124" y="57" width="36" height="3.5" fill="#a8844c"/><rect x="127" y="66" width="30" height="22" fill="#4e3c2a"/><path d="M41 90 L43 66 Q50 52 64 49 L94 49 Q110 52 116 66 L118 90Z" fill="#4a4b4e"/><path d="M64 10 Q66 2 79 2 Q92 2 95 10 Q99 26 100 44 Q104 62 98 78 Q92 82 86 76 Q84 62 86 50 L72 50 Q74 62 72 76 Q66 82 60 78 Q54 62 58 44 Q59 26 64 10Z" fill="#c08f5c"/><path d="M62 40 Q58 56 62 74 M96 40 Q100 56 96 74" stroke="#dcb07a" stroke-width="2.5" fill="none"/><ellipse cx="79" cy="30" rx="12" ry="16" fill="#e2b295"/><path d="M71 46 Q79 52 87 46 L87 54 L71 54Z" fill="#2e2f32"/></svg>
<svg class="a" style="left:102.2px;top:551.9px" width="60.6" height="33.9" viewBox="0 0 160 90" preserveAspectRatio="none"><rect x="0" y="0" width="160" height="90" fill="#3b6c78"/><rect x="40" y="0" width="61" height="21" fill="#e2d8bc"/><rect x="44" y="1" width="53" height="15" fill="#cfcfbe"/><rect x="0" y="62" width="9" height="16" fill="#cfc8b8"/><rect x="121" y="0" width="39" height="90" fill="#1b1d1d"/><rect x="124" y="1" width="34" height="17" fill="#4a4638"/><rect x="128" y="4" width="7" height="13" fill="#8a7a60"/><rect x="142" y="3" width="12" height="14" fill="#6a5a40"/><rect x="124" y="17" width="36" height="3.5" fill="#b08a52"/><rect x="124" y="28" width="36" height="20" fill="#22302c"/><rect x="136" y="42" width="22" height="15" fill="#6a9a4a"/><rect x="140" y="40" width="10" height="5" fill="#a08868"/><rect x="126" y="44" width="5" height="11" fill="#d8d4c8"/><rect x="124" y="57" width="36" height="3.5" fill="#a8844c"/><rect x="127" y="66" width="30" height="22" fill="#4e3c2a"/><path d="M41 90 L43 66 Q50 52 64 49 L94 49 Q110 52 116 66 L118 90Z" fill="#4a4b4e"/><path d="M64 10 Q66 2 79 2 Q92 2 95 10 Q99 26 100 44 Q104 62 98 78 Q92 82 86 76 Q84 62 86 50 L72 50 Q74 62 72 76 Q66 82 60 78 Q54 62 58 44 Q59 26 64 10Z" fill="#c08f5c"/><path d="M62 40 Q58 56 62 74 M96 40 Q100 56 96 74" stroke="#dcb07a" stroke-width="2.5" fill="none"/><ellipse cx="79" cy="30" rx="12" ry="16" fill="#e2b295"/><path d="M71 46 Q79 52 87 46 L87 54 L71 54Z" fill="#2e2f32"/></svg>
<svg class="a" style="left:102.3px;top:604.2px" width="59.9" height="33.6" viewBox="409 26 637 358" preserveAspectRatio="none"><rect x="409" y="26" width="637" height="358" fill="#fff"/><rect x="416" y="34" width="622" height="400" rx="28" fill="none" stroke="#555" stroke-width="2"/><rect x="438.6" y="40.6" width="36.7" height="21.1" rx="5" fill="#bdbdbd"/><rect x="484.5" y="42.7" width="74" height="18" fill="#d6d6d6"/><rect x="581.5" y="42.6" width="312" height="17.7" rx="9" fill="#f4f4f6" stroke="#777" stroke-width="2"/><circle cx="1009.8" cy="55.6" r="14.8" fill="#6cbf5c"/><rect x="438.8" y="73.5" width="72.4" height="19.4" rx="9.7" fill="#e3e3e3"/><rect x="519.7" y="73.5" width="105.1" height="19.4" rx="9.7" fill="#e3e3e3"/><rect x="633" y="73.5" width="72.7" height="19.4" rx="9.7" fill="#e3e3e3"/><rect x="713.5" y="73.5" width="51.8" height="19.4" rx="9.7" fill="#e3e3e3"/><rect x="773.4" y="73.5" width="72.7" height="19.4" rx="9.7" fill="#e3e3e3"/><rect x="853.8" y="73.5" width="99.3" height="19.4" rx="9.7" fill="#e3e3e3"/><rect x="961" y="73.5" width="63.7" height="19.4" rx="9.7" fill="#e3e3e3"/><rect x="438" y="106" width="186.7" height="104" rx="11" fill="#e9e9e9" stroke="#666" stroke-width="2.5"/><rect x="438" y="217.7" width="186.7" height="14.7" rx="3" fill="#b5b5b5"/><rect x="438" y="240" width="161.3" height="12.5" rx="3" fill="#b5b5b5"/><rect x="438" y="259.7" width="50.4" height="6.8" fill="#d8d8d8"/><rect x="438" y="270.7" width="77" height="6.4" fill="#d8d8d8"/><rect x="636" y="106" width="186.7" height="104" rx="11" fill="#e9e9e9" stroke="#666" stroke-width="2.5"/><rect x="636" y="217.7" width="186.7" height="14.7" rx="3" fill="#b5b5b5"/><rect x="636" y="240" width="161.3" height="12.5" rx="3" fill="#b5b5b5"/><rect x="636" y="259.7" width="50.4" height="6.8" fill="#d8d8d8"/><rect x="636" y="270.7" width="77" height="6.4" fill="#d8d8d8"/><rect x="834" y="106" width="186.7" height="104" rx="11" fill="#e9e9e9" stroke="#666" stroke-width="2.5"/><rect x="834" y="217.7" width="186.7" height="14.7" rx="3" fill="#b5b5b5"/><rect x="834" y="240" width="176.2" height="12.5" rx="3" fill="#b5b5b5"/><rect x="834" y="259.7" width="50.4" height="6.8" fill="#d8d8d8"/><rect x="834" y="270.7" width="77" height="6.4" fill="#d8d8d8"/><rect x="436.8" y="291" width="186.4" height="130" rx="11" fill="#e9e9e9" stroke="#666" stroke-width="2.5"/><rect x="634.4" y="291" width="186.4" height="130" rx="11" fill="#e9e9e9" stroke="#666" stroke-width="2.5"/><rect x="831.8" y="291" width="186.4" height="130" rx="11" fill="#e9e9e9" stroke="#666" stroke-width="2.5"/></svg>
<svg class="a" style="left:90px;top:500px" width="30" height="145" viewBox="90 500 30 145"><rect x="96" y="518" width="2" height="127" fill="#858a90"/><path d="M96.3 506 H104.6 V515 L96.3 521Z" fill="#588e90"/><rect x="104.6" y="506.3" width="7" height="9.8" rx="1" fill="#c8262b"/></svg></body></html>
